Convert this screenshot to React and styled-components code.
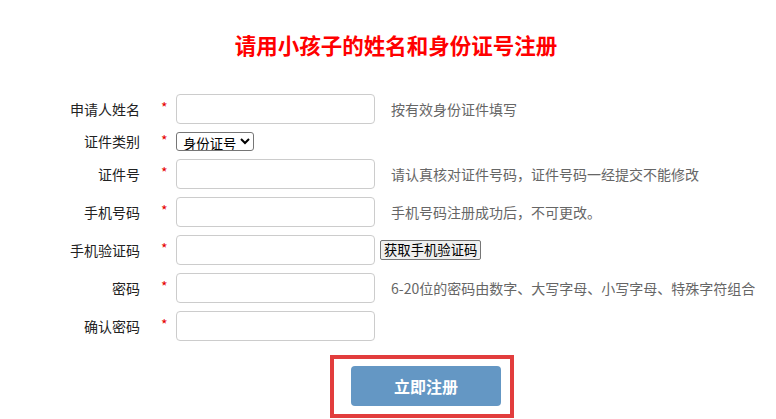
import React from 'react';
import styled, { createGlobalStyle } from 'styled-components';

const GlobalStyle = createGlobalStyle`
  html, body {
    margin: 0;
    padding: 0;
    background: #ffffff;
  }
  body {
    font-family: "Noto Sans CJK SC", "Liberation Sans", sans-serif;
    color: #333333;
  }
`;

const Page = styled.div`
  padding-top: 30px;
`;

const Title = styled.h1`
  margin: 0;
  padding-left: 16px;
  font-size: 21.5px;
  line-height: 30px;
  font-weight: 700;
  color: #ff0000;
  text-align: center;
`;

const Form = styled.form`
  display: flex;
  flex-direction: column;
  margin-top: 34px;
`;

const Row = styled.div`
  display: flex;
  align-items: center;
  margin-bottom: 8px;
`;

const Label = styled.label`
  width: 140px;
  text-align: right;
  font-size: 14px;
  line-height: 19px;
  color: #222222;
`;

const Star = styled.span`
  width: 15px;
  margin-left: 21px;
  font-size: 14px;
  line-height: 14px;
  color: #e60000;
  transform: translateY(-2px);
`;

const Input = styled.input`
  box-sizing: border-box;
  width: 199px;
  height: 30px;
  border: 1px solid #cccccc;
  border-radius: 4px;
  padding: 0 6px;
  font-size: 14px;
  outline: none;
`;

const Select = styled.select`
  box-sizing: border-box;
  height: 19px;
  padding: 0 0 0 2px;
  border: 1px solid #767676;
  border-radius: 3px;
  font-family: "Noto Sans CJK SC", sans-serif;
  font-size: 13.33px;
  line-height: 17px;
  color: #000000;
  background: #ffffff;
`;

const Hint = styled.span`
  margin-left: 16px;
  font-size: 14px;
  color: #666666;
`;

const CodeButton = styled.button`
  box-sizing: border-box;
  height: 20px;
  margin-left: 5px;
  padding: 0 3px;
  border: 1px solid #767676;
  border-radius: 2px;
  background: #efefef;
  font-family: "Noto Sans CJK SC", sans-serif;
  font-size: 13.33px;
  line-height: 18px;
  color: #000000;
`;

const SubmitRow = styled.div`
  display: flex;
  padding-left: 330px;
  margin-top: 6px;
`;

const Highlight = styled.div`
  border: 4px solid #e23d3d;
  padding: 7px 9px 8px 17px;
`;

const SubmitButton = styled.button`
  width: 150px;
  height: 40px;
  border: none;
  border-radius: 4px;
  background: #6497c4;
  color: #ffffff;
  font-family: "Noto Sans CJK SC", sans-serif;
  font-size: 16px;
  font-weight: 700;
`;

const Field = ({ label, hint, children }) => (
  <Row>
    <Label>{label}</Label>
    <Star>*</Star>
    {children}
    {hint && <Hint>{hint}</Hint>}
  </Row>
);

export default function App() {
  return (
    <Page>
      <GlobalStyle />
      <Title>请用小孩子的姓名和身份证号注册</Title>
      <Form onSubmit={e => e.preventDefault()}>
        <Field label="申请人姓名" hint="按有效身份证件填写">
          <Input type="text" />
        </Field>
        <Field label="证件类别">
          <Select defaultValue="id">
            <option value="id">身份证号</option>
          </Select>
        </Field>
        <Field label="证件号" hint="请认真核对证件号码，证件号码一经提交不能修改">
          <Input type="text" />
        </Field>
        <Field label="手机号码" hint="手机号码注册成功后，不可更改。">
          <Input type="text" />
        </Field>
        <Field label="手机验证码">
          <Input type="text" />
          <CodeButton type="button">获取手机验证码</CodeButton>
        </Field>
        <Field label="密码" hint="6-20位的密码由数字、大写字母、小写字母、特殊字符组合">
          <Input type="password" />
        </Field>
        <Field label="确认密码">
          <Input type="password" />
        </Field>
        <SubmitRow>
          <Highlight>
            <SubmitButton type="submit">立即注册</SubmitButton>
          </Highlight>
        </SubmitRow>
      </Form>
    </Page>
  );
}
